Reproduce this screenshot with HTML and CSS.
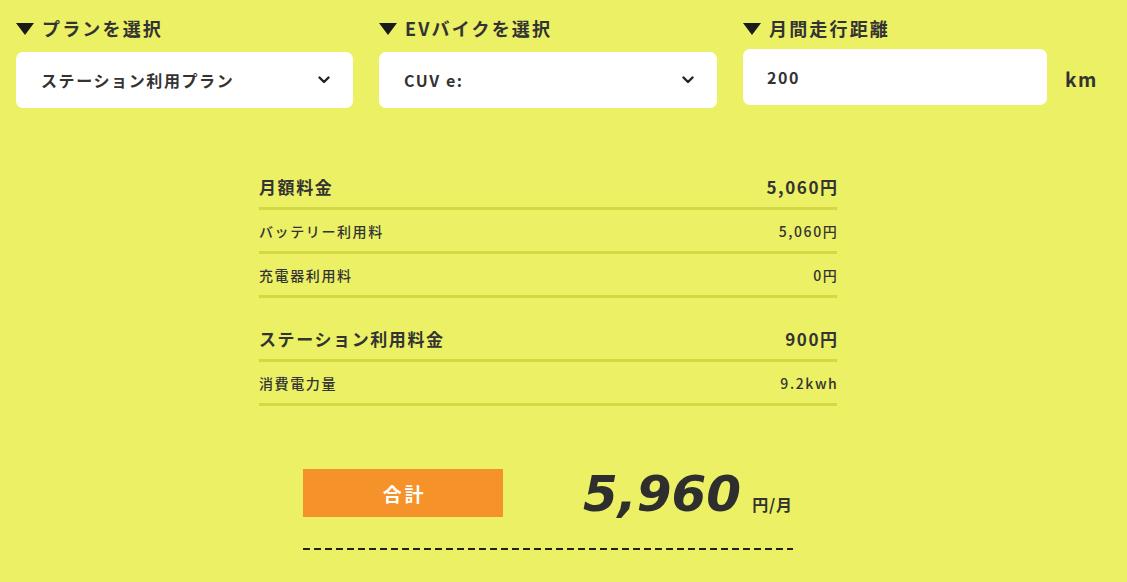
FILE: index.html
```html
<!DOCTYPE html>
<html lang="ja">
<head>
<meta charset="utf-8">
<link rel="stylesheet" href="styles.css">
</head>
<body>
<div class="page">
  <div class="controls">
    <div class="field">
      <div class="label"><span class="tri"></span>プランを選択</div>
      <div class="select">
        <span>ステーション利用プラン</span>
        <svg class="chev" width="12" height="8" viewBox="0 0 12 8"><path d="M1.5 1.5 L6 6 L10.5 1.5" fill="none" stroke="#222" stroke-width="2.4" stroke-linecap="round" stroke-linejoin="round"/></svg>
      </div>
    </div>
    <div class="field">
      <div class="label"><span class="tri"></span>EVバイクを選択</div>
      <div class="select">
        <span>CUV e:</span>
        <svg class="chev" width="12" height="8" viewBox="0 0 12 8"><path d="M1.5 1.5 L6 6 L10.5 1.5" fill="none" stroke="#222" stroke-width="2.4" stroke-linecap="round" stroke-linejoin="round"/></svg>
      </div>
    </div>
    <div class="field">
      <div class="label"><span class="tri"></span>月間走行距離</div>
      <div class="input-row">
        <div class="input">200</div>
        <span class="unit">km</span>
      </div>
    </div>
  </div>

  <div class="table">
    <div class="group">
      <div class="row head"><span>月額料金</span><span>5,060円</span></div>
      <div class="row sub"><span>バッテリー利用料</span><span>5,060円</span></div>
      <div class="row sub"><span>充電器利用料</span><span>0円</span></div>
    </div>
    <div class="group">
      <div class="row head"><span>ステーション利用料金</span><span>900円</span></div>
      <div class="row sub"><span>消費電力量</span><span>9.2kwh</span></div>
    </div>
  </div>

  <div class="total">
    <div class="total-line">
      <div class="total-label">合計</div>
      <div class="total-value"><span class="num">5,960</span><span class="per">円/月</span></div>
    </div>
    <div class="dash"></div>
  </div>
</div>
</body>
</html>
```

FILE: styles.css
```css
* { box-sizing: border-box; }
html, body { margin: 0; padding: 0; }
body {
  background: #ebf064;
  color: #333;
  font-family: "Noto Sans CJK JP", "Noto Sans", sans-serif;
  width: 1127px;
  height: 582px;
  overflow: hidden;
  letter-spacing: 0.1em;
}
.page { padding: 16px 16px 0 16px; }
.controls {
  display: grid;
  grid-template-columns: 337px 338px 355px;
  column-gap: 26px;
}
.label {
  display: flex;
  align-items: center;
  height: 24px;
  font-size: 18px;
  font-weight: 700;
  line-height: 24px;
  letter-spacing: 0.12em;
}
.tri {
  width: 0; height: 0;
  border-left: 9px solid transparent;
  border-right: 9px solid transparent;
  border-top: 12px solid #1a1a1a;
  margin-right: 8px;
  margin-top: 1px;
}
.select {
  margin-top: 12px;
  height: 56px;
  background: #fff;
  border-radius: 7px;
  display: flex;
  align-items: center;
  justify-content: space-between;
  padding: 0 23px 0 25px;
  font-size: 16px;
  font-weight: 700;
}
.chev { display: block; }
.input-row {
  margin-top: 9px;
  display: flex;
  align-items: center;
}
.input {
  width: 305px;
  height: 56px;
  background: #fff;
  border-radius: 7px;
  display: flex;
  align-items: center;
  padding-left: 24px;
  font-size: 16px;
  font-weight: 700;
}
.unit {
  margin-left: 18px;
  font-size: 19px;
  font-weight: 700;
  margin-top: 2px;
}
.table {
  width: 578px;
  margin: 56px 0 0 243px;
  display: flex;
  flex-direction: column;
  gap: 18px;
}
.row {
  display: flex;
  justify-content: space-between;
  align-items: center;
  border-bottom: 3px solid #d4d844;
}
.row span:last-child { margin-right: -0.1em; }
.row.head {
  height: 46px;
  font-size: 17px;
  font-weight: 700;
  padding-top: 1px;
}
.row.sub {
  height: 44px;
  font-size: 14px;
  font-weight: 500;
}
.total {
  margin: 63px 0 0 287px;
  width: 490px;
}
.total-line {
  display: flex;
  align-items: flex-end;
  height: 48px;
}
.total-label {
  width: 200px;
  height: 48px;
  background: #f59229;
  color: #fff;
  font-size: 19px;
  font-weight: 700;
  letter-spacing: 0.15em;
  padding-left: 3px;
  display: flex;
  align-items: center;
  justify-content: center;
}
.total-value {
  margin-left: 80px;
  display: flex;
  align-items: baseline;
}
.num {
  font-family: "DejaVu Sans", "Noto Sans", sans-serif;
  font-style: italic;
  font-weight: 700;
  font-size: 50px;
  line-height: 45px;
  letter-spacing: 0;
  color: #2e2e2e;
}
.per {
  margin-left: 11px;
  font-size: 16px;
  font-weight: 700;
  letter-spacing: 0.05em;
}
.dash {
  margin-top: 31px;
  height: 2px;
  background: repeating-linear-gradient(to right, #222 0 7px, transparent 7px 11px);
}
```
